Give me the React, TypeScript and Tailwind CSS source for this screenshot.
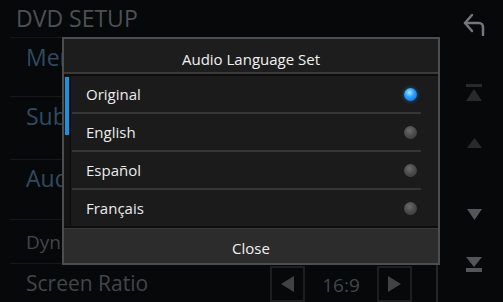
const languages = ["Original", "English", "Español", "Français"];

const RadioDot = ({ on }: { on: boolean }) =>
  on ? (
    <span className="block h-[13px] w-[13px] rounded-full bg-[radial-gradient(circle_at_42%_35%,#aee4ff_0%,#2aa2ff_40%,#0a63d8_100%)] shadow-[0_0_4px_rgba(40,150,255,0.55)]" />
  ) : (
    <span className="block h-[13px] w-[13px] rounded-full bg-[radial-gradient(circle_at_42%_35%,#6c6c6c_0%,#4a4a4a_50%,#383838_100%)]" />
  );

const StepBox = ({ dir }: { dir?: "left" | "right" }) => (
  <div className="flex h-[36px] w-[35px] items-center justify-center border-2 border-[#1c1e1f]">
    {dir === "left" && (
      <svg width="13" height="16" viewBox="0 0 13 16">
        <polygon points="0,8 13,0 13,16" fill="#404244" />
      </svg>
    )}
    {dir === "right" && (
      <svg width="13" height="16" viewBox="0 0 13 16">
        <polygon points="13,8 0,0 0,16" fill="#404244" />
      </svg>
    )}
  </div>
);

export default function App() {
  return (
    <div className="relative flex h-[302px] w-[503px] overflow-hidden bg-[#06080a] font-['Open_Sans',sans-serif]">
      {/* background settings page */}
      <div className="flex w-[440px] flex-col">
        <div className="h-[53px] pl-4 pt-[3px] text-[23px] leading-[30px] text-[#4c5155]">
          DVD SETUP
        </div>
        <div className="ml-[10px] flex w-[428px] flex-1 flex-col border-t border-r-2 border-t-[#13171a] border-r-[#232527]">
          <div className="h-[59px] border-b border-[#13171a] pl-4 pt-[4px] text-[23px] leading-[30px] text-[#2f4b61]">
            Menu Language
          </div>
          <div className="h-[63px] border-b border-[#13171a] pl-4 pt-[4px] text-[23px] leading-[30px] text-[#2f4b61]">
            Subtitle Language
          </div>
          <div className="h-[60px] border-b border-[#13171a] pl-4 pt-[3px] text-[23px] leading-[30px] text-[#2f4b61]">
            Audio Language
          </div>
          <div className="flex h-[44px] items-center border-b border-[#13171a] pl-4 pr-[24px]">
            <span className="text-[19px] leading-[26px] text-[#434649]">Dynamic Range Control</span>
            <div className="ml-auto flex items-center">
              <StepBox />
              <div className="w-[72px]" />
              <StepBox />
            </div>
          </div>
          <div className="flex flex-1 items-start pl-4 pr-[24px]">
            <span className="pt-[5px] text-[21px] leading-[28px] text-[#434649]">Screen Ratio</span>
            <div className="ml-auto mt-[2px] flex items-start">
              <StepBox dir="left" />
              <div className="w-[72px] pt-[6px] text-center text-[19px] leading-[26px] text-[#434649]">16:9</div>
              <StepBox dir="right" />
            </div>
          </div>
        </div>
      </div>

      {/* right control column */}
      <div className="flex flex-1 flex-col items-center pl-[5px]">
        <svg className="mt-[12px]" width="24" height="24" viewBox="0 0 24 24" fill="none" stroke="#74777a" strokeWidth="2.5" strokeLinecap="round" strokeLinejoin="round">
          <path d="M10 3 L3 11 L10 19" />
          <path d="M3 11 H17 A4 4 0 0 1 21 15 V23" />
        </svg>
        <svg className="mt-[48px]" width="16" height="17" viewBox="0 0 16 17">
          <rect x="0" y="0" width="16" height="3" fill="#282a2c" />
          <polygon points="8,5 16,17 0,17" fill="#282a2c" />
        </svg>
        <svg className="mt-[37px]" width="15" height="10" viewBox="0 0 15 10">
          <polygon points="7.5,0 15,10 0,10" fill="#282a2c" />
        </svg>
        <svg className="mt-[61px]" width="15" height="11" viewBox="0 0 15 11">
          <polygon points="0,0 15,0 7.5,11" fill="#535658" />
        </svg>
        <svg className="mt-[37px]" width="16" height="16" viewBox="0 0 16 16">
          <polygon points="0,0 16,0 8,10" fill="#535658" />
          <rect x="0" y="11" width="16" height="4" fill="#535658" />
        </svg>
      </div>

      {/* modal dialog */}
      <div className="absolute left-[62px] top-[37px] flex h-[228px] w-[378px] flex-col border-2 border-[#4d4d4d] bg-[#0d0d0d]">
        <div className="flex h-[33px] items-center justify-center bg-[#1d1d1d] pt-[6px] text-[15px] font-medium leading-[20px] text-[#f0f0f0]">
          Audio Language Set
        </div>
        <div className="h-[2px] bg-[#3a3a3a]" />
        <div className="h-[2px] bg-[#0c0c0c]" />
        <div className="flex h-[150px]">
          <div className="w-[7px] border-r border-[#0a0a0a] bg-[#151515]">
            <div className="ml-[1px] mt-[1px] h-[58px] w-[4px] bg-[#1f8fe0]" />
          </div>
          <div className="flex flex-1 flex-col bg-[#1b1b1b]">
            {languages.map((lang, i) => (
              <div key={lang} className="flex flex-col">
                {i > 0 && <div className="ml-[1px] mr-[17px] h-[2px] bg-[#363636]" />}
                <div className="flex h-[36px] items-center pl-[15px] pr-[21px]">
                  <span className="text-[15px] font-medium leading-[20px] text-[#ececec]">{lang}</span>
                  <span className="ml-auto">
                    <RadioDot on={i === 0} />
                  </span>
                </div>
              </div>
            ))}
          </div>
        </div>
        <div className="h-[2px] bg-[#0e0e0e]" />
        <div className="flex flex-1 items-center justify-center border-t border-[#3a3a3a] bg-[#2c2c2c] pt-[3px] text-[15px] font-medium leading-[20px] text-[#f0f0f0]">
          Close
        </div>
      </div>
    </div>
  );
}
